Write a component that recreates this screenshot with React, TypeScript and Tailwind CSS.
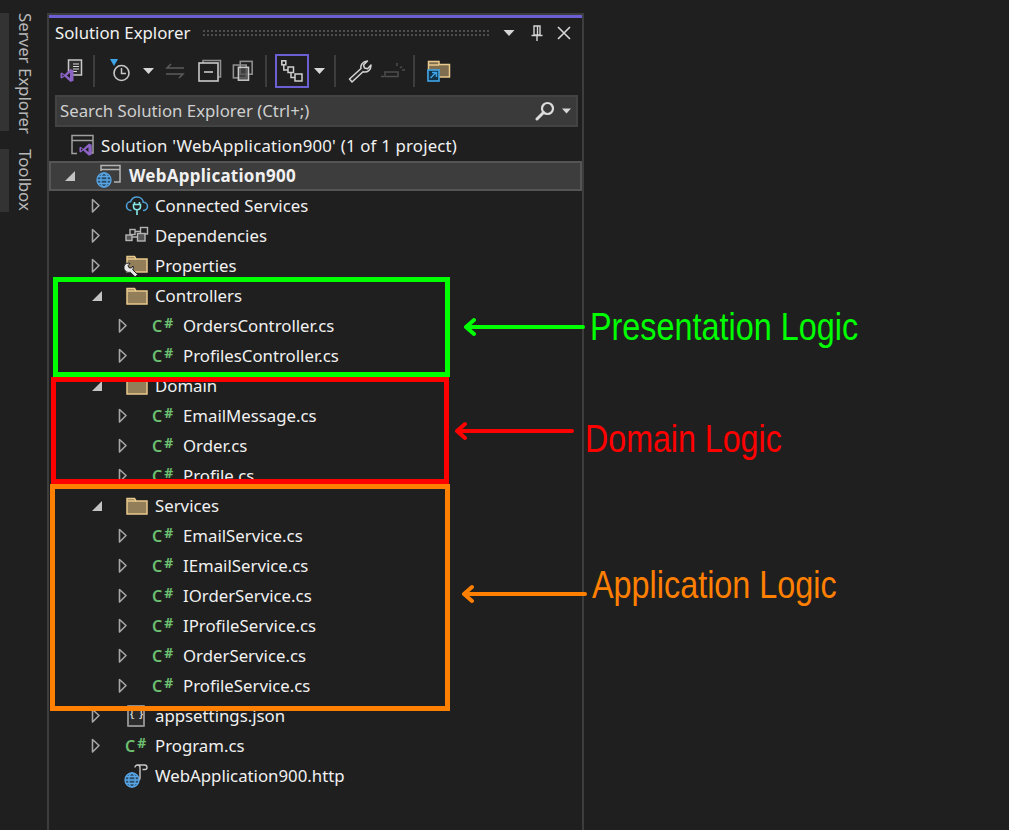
type IconProps = { className?: string };

const gray = "#c8c8c8";

function Chevron() {
  return (
    <svg width="12" height="16" viewBox="0 0 12 16" fill="none">
      <path d="M1.500 1.500 8 7.500l-6.500 6.500z" stroke="#a6a6a6" strokeWidth="1.600" strokeLinejoin="round" />
    </svg>
  );
}

function OpenChevron() {
  return (
    <svg width="12" height="12" viewBox="0 0 12 12">
      <path d="M11 1v10H1z" fill="#c4c4c4" />
    </svg>
  );
}

function Caret({ className }: IconProps) {
  return (
    <svg width="11" height="6" viewBox="0 0 11 6" className={className}>
      <path d="M0 0h11L5.500 6z" fill="#d6d6d6" />
    </svg>
  );
}

function VsGlyph() {
  return (
    <>
      <path d="M11.500 1.500 5.500 7 2.800 5 1.500 5.800v4.400L2.800 11l2.700-2 6 5.500 3-1.300V2.800z" fill="#8a63c4" />
      <path d="M11 5.500 7.800 8l3.200 2.500zM3.200 6.700v2.600L5 8z" fill="#1f1f1f" />
    </>
  );
}

function SolutionIcon() {
  return (
    <svg width="26" height="26" viewBox="0 0 26 26" fill="none">
      <path d="M2 9V2.500h21V20h-3M2 7.500h21M2 9v11.500h5" stroke="#a0a0a0" strokeWidth="1.500" />
      <g transform="translate(8 9) scale(0.95)">
        <VsGlyph />
      </g>
    </svg>
  );
}

function Globe({ size = 16 }: { size?: number }) {
  return (
    <svg width={size} height={size} viewBox="0 0 16 16" fill="none" stroke="#58a6e6" strokeWidth="1.300">
      <circle cx="8" cy="8" r="7" fill="#2c4d68" />
      <ellipse cx="8" cy="8" rx="3.200" ry="7" />
      <path d="M1 8h14M2 4.500h12M2 11.500h12" />
    </svg>
  );
}

function ProjectIcon() {
  return (
    <div className="relative h-[24px] w-[26px]">
      <svg width="26" height="24" viewBox="0 0 26 24" fill="none" className="absolute left-0 top-0">
        <path d="M5 7V1.500h19V18h-6M5 5.500h19" stroke="#b4b4b4" strokeWidth="1.500" />
      </svg>
      <div className="absolute bottom-0 left-0">
        <Globe />
      </div>
    </div>
  );
}

function CloudIcon() {
  return (
    <svg width="24" height="24" viewBox="0 0 24 24" fill="none">
      <path d="M6.500 16.500C3 16.500 1.500 14 1.500 12c0-2.500 2-4.200 4-4.200C6.500 5 9 3 12 3c3.500 0 6 2.500 6.300 5.300 2.500 0 4.200 1.800 4.200 4s-1.800 4.200-4.500 4.200" stroke="#4f9fd6" strokeWidth="1.600" />
      <path d="M9.500 8v2M14.500 8v2M8.500 10.500h7v2c0 2-1.500 3.200-3.500 3.200s-3.500-1.200-3.500-3.200zM12 16v5" stroke="#86e6e6" strokeWidth="1.600" />
    </svg>
  );
}

function DependenciesIcon() {
  return (
    <svg width="24" height="24" viewBox="0 0 24 24" fill="none" stroke="#b4b4b4" strokeWidth="1.400">
      <rect x="1" y="11" width="6" height="5.500" fill="#555555" />
      <rect x="5" y="5.500" width="5" height="5" />
      <rect x="15.500" y="3.500" width="7" height="6.500" />
      <rect x="12.500" y="9.500" width="7.500" height="7.500" fill="#555555" />
      <path d="M7 13h5.500M10 7.500h5.500" />
    </svg>
  );
}

function Folder() {
  return (
    <svg width="24" height="20" viewBox="0 0 24 20" fill="none">
      <path d="M2 2.500h7.500L11 5h11v13H2z" fill="#927f5a" stroke="#e9c98c" strokeWidth="1.500" />
      <path d="M2 5h9" stroke="#e9c98c" strokeWidth="1.500" />
    </svg>
  );
}

function PropertiesIcon() {
  return (
    <svg width="24" height="24" viewBox="0 0 24 24" fill="none" className="overflow-visible">
      <path d="M2 2.500h7.500L11 5h11v13H2z" fill="#927f5a" stroke="#e9c98c" strokeWidth="1.500" />
      <path d="M2 5h9" stroke="#e9c98c" strokeWidth="1.500" />
      <path d="M-1 12c1-2.500 3.500-3.500 6-2.500l-2 2.200 1 2 2.300.3 1.700-2c.6 1.500.4 2.800-.3 3.800l5 4.700-2.500 2.500-5-4.800c-2.700.8-5.500-.8-6.200-3.700z" fill="#e8e8e8" stroke="#1f1f1f" strokeWidth="1" />
    </svg>
  );
}

function CsIcon() {
  return (
    <div className="flex w-[24px] items-start font-['Noto_Sans',sans-serif] leading-none text-[#6cc070]">
      <span className="text-[16px] font-semibold">C</span>
      <span className="ml-[2px] -mt-[2px] text-[14px] font-bold">#</span>
    </div>
  );
}

function JsonIcon() {
  return (
    <div className="flex h-[22px] w-[18px] items-center justify-center rounded-[1px] border-2 border-[#8c8c8c] bg-[#2b2b2b] font-['Liberation_Mono',monospace] text-[9px] font-bold tracking-[-1px] text-[#dcdcdc]">
      {"{ }"}
    </div>
  );
}

function HttpIcon() {
  return (
    <div className="relative h-[24px] w-[26px]">
      <svg width="26" height="24" viewBox="0 0 26 24" fill="none" className="absolute left-0 top-0">
        <path d="M11 3.500c0-1.500 1-2.500 2.500-2.500h7c1.500 0 2.500 1 2.500 2.500s-1 2-2 2h-2.500M13.500 1c1.500 0 2.500 1 2.500 2.500v10c0 1.500-.500 2.500-2 2.500" stroke="#c8c8c8" strokeWidth="1.400" />
      </svg>
      <div className="absolute bottom-0 left-0">
        <Globe />
      </div>
    </div>
  );
}

function SyncDocIcon() {
  return (
    <svg width="26" height="26" viewBox="0 0 26 26" fill="none">
      <rect x="11.500" y="2" width="13" height="15" fill="#2e2e2e" stroke="#c8c8c8" strokeWidth="1.500" />
      <path d="M16 6h6M16 8.500h6M16 11h6M16 13.500h4" stroke="#d8d8d8" strokeWidth="1.200" />
      <g transform="translate(2 9.500)">
        <VsGlyph />
      </g>
    </svg>
  );
}

function HistoryIcon() {
  return (
    <svg width="24" height="28" viewBox="0 0 24 28" fill="none">
      <path d="M0 2h8L4 9z" fill="#3fa4e8" />
      <circle cx="11.500" cy="16" r="7.500" stroke="#c8c8c8" strokeWidth="1.600" />
      <path d="M11.500 11v5.500H16" stroke="#c8c8c8" strokeWidth="1.500" />
    </svg>
  );
}

function ArrowsIcon() {
  return (
    <svg width="20" height="16" viewBox="0 0 20 16" fill="none" stroke="#5c5c5c" strokeWidth="1.500">
      <path d="M19 5H2l4-4M1 11h17l-4 4" />
    </svg>
  );
}

function CollapseIcon() {
  return (
    <svg width="24" height="24" viewBox="0 0 24 24" fill="none" stroke={gray} strokeWidth="1.600">
      <path d="M5 4V1.500h17.500V18H20" stroke="#8e8e8e" />
      <rect x="1" y="4" width="19" height="18" />
      <path d="M6 13h9" />
    </svg>
  );
}

function CopiesIcon() {
  return (
    <svg width="22" height="22" viewBox="0 0 24 24" fill="none" strokeWidth="1.700">
      <rect x="9" y="1.500" width="13" height="14" stroke="#909090" />
      <rect x="1.500" y="5.500" width="14" height="14" stroke="#909090" />
      <rect x="7" y="8" width="11" height="14" fill="#4a4a4a" fillOpacity="0.700" stroke={gray} />
    </svg>
  );
}

function TreeIcon() {
  return (
    <svg width="22" height="22" viewBox="0 0 22 22" fill="none" stroke="#d0d0d0" strokeWidth="1.500">
      <rect x="0.800" y="0.800" width="4" height="4" />
      <rect x="7" y="7" width="5.500" height="5.500" />
      <rect x="14" y="14" width="7" height="7" />
      <path d="M2.800 5v5H7M10 13v4.500h4" />
    </svg>
  );
}

function WrenchIcon() {
  return (
    <svg width="24" height="24" viewBox="0 0 24 24" fill="none">
      <path d="M1.500 20 13 9.500c-.700-3 1-7 6.500-7.500L15.500 6l1 3 3 .800L23 6c.300 5-3.500 7.800-8 6.800L4 23z" fill="#262626" stroke="#d4d4d4" strokeWidth="1.500" strokeLinejoin="round" />
    </svg>
  );
}

function DisabledTool() {
  return (
    <svg width="24" height="20" viewBox="0 0 24 20" fill="none" stroke="#4e4e4e" strokeWidth="1.500">
      <path d="M0 15.500h3.500M4 15.500V11h13v4.500H4M16 2v3M19 7l2-1.500M21 9h3" />
    </svg>
  );
}

function ShortcutFolderIcon() {
  return (
    <svg width="24" height="24" viewBox="0 0 24 24" fill="none">
      <path d="M1.500 2.500h10.500V5.500h10.500V18h-21z" fill="#7f6d4f" stroke="#e9c98c" strokeWidth="1.500" />
      <path d="M1.500 6h10.500" stroke="#e9c98c" strokeWidth="1.500" />
      <rect x="1" y="11" width="11" height="11" fill="#123248" stroke="#3fa4e8" strokeWidth="1.600" />
      <path d="M3.500 19 9 13.500M5 13.500h4.500V18" stroke="#3fa4e8" strokeWidth="1.500" />
    </svg>
  );
}

function PinIcon() {
  return (
    <svg width="12" height="16" viewBox="0 0 12 16" fill="none" stroke="#d4d4d4" strokeWidth="1.400">
      <path d="M3 1h6v9H3zM6.500 1v9M0.500 10.500h11M6 11v5" />
    </svg>
  );
}

function SearchIcon() {
  return (
    <svg width="20" height="20" viewBox="0 0 20 20" fill="none" stroke="#dcdcdc">
      <circle cx="12.500" cy="7.500" r="5.500" strokeWidth="2.200" />
      <path d="M8.500 11.500 2 18" strokeWidth="3" strokeLinecap="round" />
    </svg>
  );
}

function Sep() {
  return <div className="h-[32px] w-[2px] bg-[#3d3d3d]" />;
}

type Row = {
  label: string;
  pad: string;
  icon: React.ReactNode;
  chevron?: "open" | "closed";
};

const L1 = "pl-[42px]";
const L2 = "pl-[69px]";

const rows: Row[] = [
  { label: "Connected Services", pad: L1, icon: <CloudIcon />, chevron: "closed" },
  { label: "Dependencies", pad: L1, icon: <DependenciesIcon />, chevron: "closed" },
  { label: "Properties", pad: L1, icon: <PropertiesIcon />, chevron: "closed" },
  { label: "Controllers", pad: L1, icon: <Folder />, chevron: "open" },
  { label: "OrdersController.cs", pad: L2, icon: <CsIcon />, chevron: "closed" },
  { label: "ProfilesController.cs", pad: L2, icon: <CsIcon />, chevron: "closed" },
  { label: "Domain", pad: L1, icon: <Folder />, chevron: "open" },
  { label: "EmailMessage.cs", pad: L2, icon: <CsIcon />, chevron: "closed" },
  { label: "Order.cs", pad: L2, icon: <CsIcon />, chevron: "closed" },
  { label: "Profile.cs", pad: L2, icon: <CsIcon />, chevron: "closed" },
  { label: "Services", pad: L1, icon: <Folder />, chevron: "open" },
  { label: "EmailService.cs", pad: L2, icon: <CsIcon />, chevron: "closed" },
  { label: "IEmailService.cs", pad: L2, icon: <CsIcon />, chevron: "closed" },
  { label: "IOrderService.cs", pad: L2, icon: <CsIcon />, chevron: "closed" },
  { label: "IProfileService.cs", pad: L2, icon: <CsIcon />, chevron: "closed" },
  { label: "OrderService.cs", pad: L2, icon: <CsIcon />, chevron: "closed" },
  { label: "ProfileService.cs", pad: L2, icon: <CsIcon />, chevron: "closed" },
  { label: "appsettings.json", pad: L1, icon: <div className="ml-[2px]"><JsonIcon /></div>, chevron: "closed" },
  { label: "Program.cs", pad: L1, icon: <CsIcon />, chevron: "closed" },
  { label: "WebApplication900.http", pad: L1, icon: <div className="-ml-[1px]"><HttpIcon /></div> },
];

function TreeRow({ row }: { row: Row }) {
  return (
    <div className={`flex h-[30px] items-center ${row.pad}`}>
      <div className="flex w-[34px] items-center">
        {row.chevron === "closed" && <Chevron />}
        {row.chevron === "open" && <OpenChevron />}
      </div>
      <div className={`flex items-center ${row.pad === L2 ? "w-[31px]" : "w-[30px]"}`}>{row.icon}</div>
      <span className="whitespace-nowrap">{row.label}</span>
    </div>
  );
}

function Annotation({ children, className }: { children: string; className: string }) {
  return (
    <span
      className={`absolute origin-left whitespace-nowrap font-['Liberation_Sans',sans-serif] text-[39px] leading-none ${className}`}
    >
      {children}
    </span>
  );
}

function Arrow({ color, width, className }: { color: string; width: number; className: string }) {
  return (
    <svg width={width} height="20" viewBox={`0 0 ${width} 20`} fill="none" className={`absolute ${className}`} stroke={color} strokeWidth="4" strokeLinecap="round" strokeLinejoin="round">
      <path d={`M${width - 2} 10H3M11 3 3 10l8 7`} />
    </svg>
  );
}

export default function App() {
  return (
    <div className="relative flex h-[830px] w-[1009px] overflow-hidden bg-[#1f1f1f] font-['Noto_Sans',sans-serif] text-[16.800px] text-[#f1f1f1]">
      <div className="flex w-[47px] shrink-0 flex-col gap-[18px] pt-[13px] text-[#b8b8b8]">
        <div className="flex h-[118px]">
          <div className="w-[9px] bg-[#333333]" />
          <span className="ml-[6px] whitespace-nowrap leading-[20px] [writing-mode:vertical-rl]">Server Explorer</span>
        </div>
        <div className="flex h-[63px]">
          <div className="w-[9px] bg-[#333333]" />
          <span className="ml-[6px] whitespace-nowrap leading-[20px] [writing-mode:vertical-rl]">Toolbox</span>
        </div>
      </div>

      <div className="mt-[13px] flex w-[537px] shrink-0 flex-col border-x-2 border-t-2 border-[#3d3d3d]">
        <div className="h-[3px] bg-[#6b5fd3]" />

        <div className="flex h-[29px] items-center pl-[6px]">
          <span className="w-[135px] whitespace-nowrap">Solution Explorer</span>
          <div className="ml-[12px] h-[8px] w-[289px] bg-[radial-gradient(#4d4d4d_1px,transparent_1.200px)] bg-size-[4px_4px]" />
          <Caret className="ml-[12px] w-[12px]" />
          <div className="ml-[16px] flex w-[12px]"><PinIcon /></div>
          <svg width="14" height="14" viewBox="0 0 14 14" className="ml-[14px]" stroke="#d8d8d8" strokeWidth="1.600">
            <path d="M1 1l12 12M13 1 1 13" />
          </svg>
        </div>

        <div className="flex h-[48px] items-center">
          <div className="ml-[8px] w-[36px]"><SyncDocIcon /></div>
          <Sep />
          <div className="ml-[15px] w-[33px]"><HistoryIcon /></div>
          <Caret />
          <div className="ml-[11px] w-[33px]"><ArrowsIcon /></div>
          <div className="w-[34px]"><CollapseIcon /></div>
          <div className="w-[33px]"><CopiesIcon /></div>
          <Sep />
          <div className="ml-[8px] flex h-[34px] w-[34px] items-center justify-center border-2 border-[#6b5fd3]"><TreeIcon /></div>
          <Caret className="ml-[5px]" />
          <div className="ml-[9px]"><Sep /></div>
          <div className="ml-[12px] w-[33px]"><WrenchIcon /></div>
          <div className="w-[32px]"><DisabledTool /></div>
          <Sep />
          <div className="ml-[12px]"><ShortcutFolderIcon /></div>
        </div>

        <div className="ml-[6px] mr-[4px] flex h-[32px] items-center border-2 border-[#434343] bg-[#3a3a3a] pl-[3px] pr-[5px] text-[#cfcfcf]">
          <span className="flex-1 whitespace-nowrap">Search Solution Explorer (Ctrl+;)</span>
          <SearchIcon />
          <Caret className="ml-[7px] w-[9px]" />
        </div>

        <div className="mt-[4px] flex flex-col">
          <div className="flex h-[30px] items-center pl-[21px]">
            <div className="w-[31px]"><SolutionIcon /></div>
            <span className="whitespace-nowrap tracking-[0.2px]">Solution 'WebApplication900' (1 of 1 project)</span>
          </div>
          <div className="flex h-[30px] items-center border-2 border-[#555555] bg-[#3d3d3d] pl-[13px]">
            <div className="flex w-[32px] items-center"><OpenChevron /></div>
            <div className="w-[33px]"><ProjectIcon /></div>
            <span className="whitespace-nowrap text-[17px] font-bold tracking-[0.25px]">WebApplication900</span>
          </div>
          {rows.map((row) => (
            <TreeRow key={row.label} row={row} />
          ))}
        </div>
      </div>

      <div className="absolute left-[53px] top-[277px] h-[100px] w-[397px] border-[5px] border-[#00ff00]" />
      <div className="absolute left-[51px] top-[377px] h-[107px] w-[398px] border-[5px] border-[#ff0000]" />
      <div className="absolute left-[50px] top-[484px] h-[227px] w-[400px] border-[5px] border-[#ff8000]" />

      <Arrow color="#00ff00" width={122} className="left-[463px] top-[317px]" />
      <Arrow color="#ff0000" width={120} className="left-[454px] top-[421px]" />
      <Arrow color="#ff8000" width={126} className="left-[461px] top-[584px]" />

      <Annotation className="left-[590px] top-[307px] scale-x-[0.83] text-[#00ff00]">Presentation Logic</Annotation>
      <Annotation className="left-[585px] top-[419px] scale-x-[0.825] text-[#ff0000]">Domain Logic</Annotation>
      <Annotation className="left-[592px] top-[565px] scale-x-[0.83] text-[#ff8000]">Application Logic</Annotation>
    </div>
  );
}
